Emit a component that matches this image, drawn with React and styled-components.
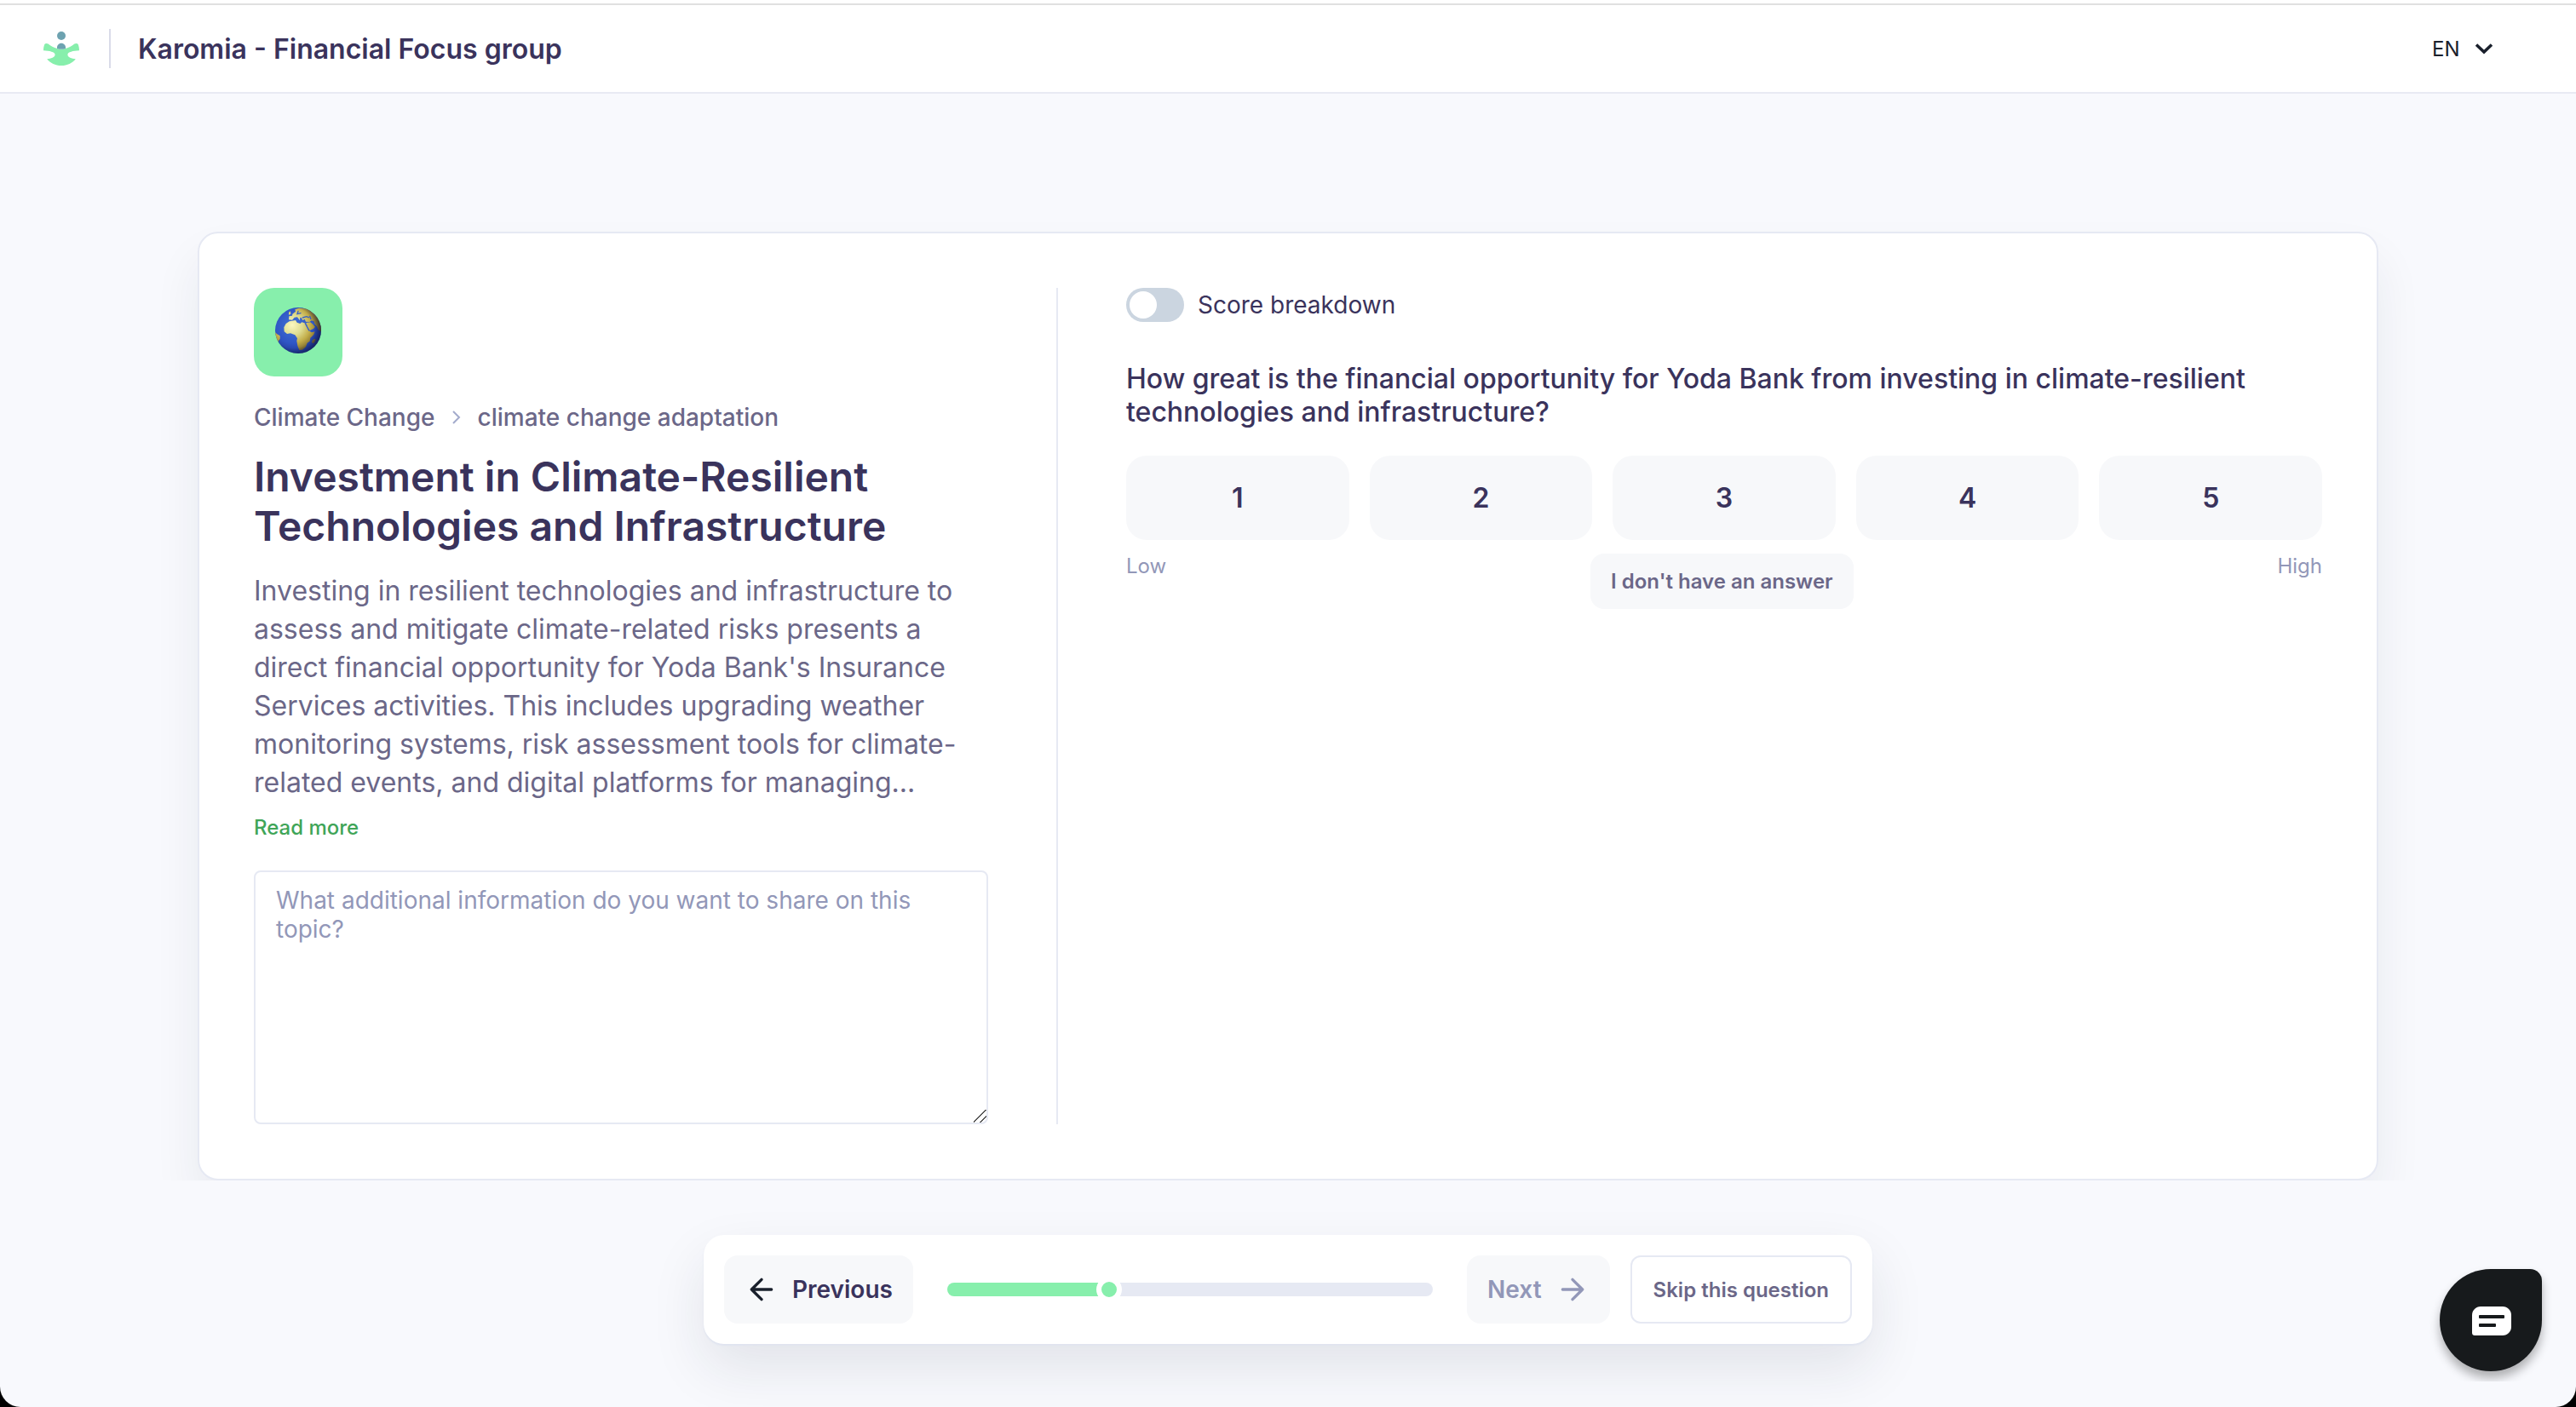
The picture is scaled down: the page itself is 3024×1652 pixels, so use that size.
import { useState } from 'react';
import styled, { createGlobalStyle } from 'styled-components';

const GlobalStyle = createGlobalStyle`
  * {
    box-sizing: border-box;
  }

  body {
    margin: 0;
    background: #000;
    font-family: 'Inter', sans-serif;
    color: #3a335c;
  }

  h1, h2, p {
    margin: 0;
  }

  button, select, textarea {
    font-family: inherit;
  }
`;

const Page = styled.div`
  display: flex;
  flex-direction: column;
  min-height: 100vh;
  background: #f8f9fd;
  border-radius: 0 0 24px 24px;
`;

const Header = styled.header`
  display: flex;
  align-items: center;
  gap: 32px;
  height: 106px;
  margin-top: 4px;
  padding: 0 92px 0 48px;
  background: #fff;
  border-top: 2px solid #e0e0e0;
  border-bottom: 2px solid #e8eaf3;
  box-shadow: 0 -4px 0 #fff;
`;

const HeaderDivider = styled.span`
  width: 2px;
  height: 46px;
  background: #d9dbe9;
`;

const HeaderTitle = styled.h1`
  font-size: 32px;
  line-height: 39px;
  font-weight: 600;
`;

const LanguagePicker = styled.label`
  position: relative;
  display: flex;
  align-items: center;
  margin-left: auto;
  color: #1a202c;

  svg {
    position: absolute;
    right: 0;
    pointer-events: none;
  }
`;

const LanguageSelect = styled.select`
  appearance: none;
  width: 77px;
  padding: 0;
  border: 0;
  background: transparent;
  color: inherit;
  font-size: 24px;
  line-height: 29px;
`;

const Stage = styled.main`
  overflow: hidden;
  padding: 162px 64px 0;
`;

const Card = styled.section`
  display: grid;
  grid-template-columns: 862fr 2px 1404fr;
  gap: 80px;
  max-width: 2560px;
  margin: 0 auto;
  padding: 64px;
  background: #fff;
  border: 2px solid #e6e9f3;
  border-radius: 24px;
  box-shadow: 0 32px 56px rgba(30, 40, 60, 0.07);
`;

const ColumnDivider = styled.div`
  background: #e6e9f3;
`;

const Topic = styled.div`
  display: flex;
  flex-direction: column;
  align-items: flex-start;
`;

const TopicIcon = styled.div`
  display: flex;
  align-items: center;
  justify-content: center;
  width: 104px;
  height: 104px;
  padding-bottom: 4px;
  border-radius: 24px;
  background: #87efac;
`;

const Breadcrumb = styled.nav`
  display: flex;
  align-items: center;
  gap: 16px;
  margin-top: 32px;
  font-size: 28px;
  line-height: 32px;
  font-weight: 500;
  color: #6b6788;
`;

const TopicTitle = styled.h2`
  margin-top: 25px;
  font-size: 48px;
  line-height: 58px;
  font-weight: 600;
`;

const Description = styled.p`
  margin-top: 24px;
  font-size: 32px;
  line-height: 45px;
  color: #6b6788;
`;

const ReadMore = styled.button`
  margin-top: 16px;
  padding: 0;
  border: 0;
  background: none;
  font-size: 24px;
  line-height: 29px;
  font-weight: 500;
  color: #3fa558;
`;

const Comment = styled.textarea`
  width: 100%;
  min-height: 298px;
  margin-top: 36px;
  padding: 16px 24px;
  border: 2px solid #e6e9f3;
  border-radius: 8px;
  font-size: 28px;
  line-height: 34px;
  resize: vertical;

  &::placeholder {
    color: #9297b8;
  }

  &::-webkit-resizer {
    background: linear-gradient(
      135deg,
      transparent 46%,
      #555 46% 53%,
      transparent 53% 73%,
      #555 73% 80%,
      transparent 80%
    );
  }
`;

const ToggleLabel = styled.label`
  display: flex;
  align-items: center;
  gap: 16px;
  font-size: 28px;
  line-height: 34px;
`;

const Toggle = styled.input`
  appearance: none;
  width: 68px;
  height: 40px;
  margin: 0;
  padding: 4px;
  border-radius: 20px;
  background: #cbd5e0;

  &::before {
    content: '';
    display: block;
    width: 32px;
    height: 32px;
    border-radius: 50%;
    background: #fff;
  }

  &:checked {
    background: #87efac;
  }

  &:checked::before {
    margin-left: auto;
  }
`;

const Question = styled.h2`
  margin-top: 47px;
  font-size: 32px;
  line-height: 39px;
  font-weight: 500;
`;

const Scores = styled.div`
  display: grid;
  grid-template-columns: repeat(5, 1fr);
  gap: 24px;
  margin-top: 32px;
`;

const ScoreButton = styled.button`
  height: 99px;
  border: 0;
  border-radius: 24px;
  background: ${({ $active }) => ($active ? '#87efac' : '#f7f8fa')};
  color: #3a335c;
  font-size: 32px;
  line-height: 39px;
  font-weight: 600;
`;

const ScoreFooter = styled.div`
  display: flex;
  align-items: flex-start;
  justify-content: space-between;
  margin-top: 16px;
  font-size: 24px;
  line-height: 29px;
  color: #9297b8;
`;

const NoAnswerButton = styled.button`
  padding: 18px 24px;
  border: 0;
  border-radius: 16px;
  background: #f7f8fa;
  color: #6b6788;
  font-size: 24px;
  line-height: 29px;
  font-weight: 600;
`;

const BottomBar = styled.footer`
  display: flex;
  align-items: center;
  gap: 24px;
  width: 1372px;
  max-width: 100%;
  margin: 64px auto 74px;
  padding: 24px;
  background: #fff;
  border-radius: 24px;
  box-shadow: 0 2px 2px #e0e4f0, 0 28px 64px rgba(30, 35, 60, 0.1);
`;

const NavButton = styled.button`
  display: flex;
  align-items: center;
  gap: 16px;
  height: 80px;
  padding: 0 24px;
  border: 0;
  border-radius: 16px;
  background: #f7f8fa;
  color: #3a335c;
  font-size: 28px;
  line-height: 34px;
  font-weight: 600;

  svg {
    color: #1a202c;
  }

  &:disabled,
  &:disabled svg {
    color: #9297b8;
  }
`;

const SkipButton = styled.button`
  height: 80px;
  padding: 0 25px;
  border: 2px solid #e6e9f3;
  border-radius: 12px;
  background: #fff;
  color: #6b6788;
  font-size: 24px;
  line-height: 29px;
  font-weight: 600;
  white-space: nowrap;
`;

const Progress = styled.input`
  appearance: none;
  flex: 1;
  min-width: 0;
  height: 16px;
  margin: 0 16px;
  border-radius: 8px;
  background: linear-gradient(to right, #87efac 33%, #e6e9f3 33%);

  &::-webkit-slider-thumb {
    appearance: none;
    width: 30px;
    height: 30px;
    border: 6px solid #fff;
    border-radius: 50%;
    background: #87efac;
  }
`;

const Launcher = styled.div`
  position: fixed;
  right: 28px;
  bottom: 30px;
  padding: 12px;
  overflow: hidden;
`;

const ChatButton = styled.button`
  display: flex;
  align-items: center;
  justify-content: center;
  width: 120px;
  height: 120px;
  padding: 2px 0 0 2px;
  border: 0;
  border-radius: 60px 14px 60px 60px;
  background: #171a1c;
  box-shadow: 0 8px 12px rgba(0, 0, 0, 0.3);
`;

const Logo = () => (
  <svg width="48" height="48" viewBox="0 0 48 48" aria-hidden="true">
    <path
      fill="#87efac"
      d="M3 26.3C3 23 3.6 20.5 4.5 18.8C5.3 17.7 7.2 17.6 8.6 18.6C11.5 21 15 23.2 19.2 23.9Q24 26 28.8 23.9C33 23.2 36.5 21 39.4 18.6C40.8 17.6 42.7 17.7 43.5 18.8C44.4 20.5 45 23 45 26.3C38 26.6 31.4 28 31.4 31.3C31.4 34.5 36 35.8 40.8 36.2C37 41 31 44 24 44C17 44 11 41 7.2 36.2C12 35.8 16.6 34.5 16.6 31.3C16.6 28 10 26.6 3 26.3Z"
    />
    <circle cx="24" cy="9" r="5" fill="#6da2b0" />
    <path fill="#6da2b0" d="M19 23.9C18.6 20 21 17.7 24 17.7C27 17.7 29.4 20 29 23.9Q24 25.8 19 23.9Z" />
  </svg>
);

const Globe = () => (
  <svg width="56" height="56" viewBox="97 90 168 168" aria-hidden="true">
    <defs>
      <radialGradient id="ocean" cx="0.4" cy="0.4" r="0.65">
        <stop offset="0" stopColor="#4273d6" />
        <stop offset="0.6" stopColor="#2f55c4" />
        <stop offset="1" stopColor="#1d3389" />
      </radialGradient>
      <radialGradient id="land" gradientUnits="userSpaceOnUse" cx="160" cy="155" r="100">
        <stop offset="0" stopColor="#fbf7c0" />
        <stop offset="0.35" stopColor="#dfdd92" />
        <stop offset="0.65" stopColor="#c2ac48" />
        <stop offset="1" stopColor="#6b5a26" />
      </radialGradient>
      <radialGradient id="shade" cx="0.4" cy="0.45" r="0.62">
        <stop offset="0.7" stopColor="#0c1440" stopOpacity="0" />
        <stop offset="1" stopColor="#0c1440" stopOpacity="0.6" />
      </radialGradient>
      <clipPath id="sphere">
        <circle cx="181" cy="174" r="81" />
      </clipPath>
    </defs>
    <circle cx="181" cy="174" r="81" fill="url(#ocean)" />
    <g fill="url(#land)" clipPath="url(#sphere)">
      <path d="M131 163L138 150L150 142L172 138L177 146L188 150L194 145L209 149L214 163L222 177L229 181L240 178L236 189L224 200L222 212L213 218L208 232L196 242L185 243L179 228L176 211L178 202L170 190L154 184L142 186L132 178Z" />
      <path d="M148 136L149 124L160 122L161 116L172 107L170 100L184 95L201 97L222 96L246 115L265 145L262 178L252 172L247 160L240 153L236 142L228 139L221 144L208 143L204 134L197 138L192 129L188 128L187 139L178 127L168 128L160 137Z" />
      <path d="M209 147L224 145L233 152L241 161L235 168L222 174L215 163Z" />
      <path d="M238 203L243 206L236 220L229 217L231 209Z" />
      <path d="M97 178L107 187L117 193L117 204L112 210L112 220L104 222L97 205Z" />
      <path d="M148 110L154 106L155 116L148 119Z" />
    </g>
    <g fill="none" stroke="#3560c8" strokeWidth="4" strokeLinecap="round">
      <path d="M206 149L219 174" />
      <path d="M230 144L238 153" />
      <path d="M197 129L210 125L218 128" />
      <path d="M181 106L178 116L190 113" />
      <path d="M222 124L226 134" />
    </g>
    <circle cx="181" cy="174" r="81" fill="url(#shade)" />
  </svg>
);

const Arrow = ({ d }) => (
  <svg
    width="40"
    height="40"
    viewBox="0 0 24 24"
    fill="none"
    stroke="currentColor"
    strokeWidth="2"
    strokeLinecap="round"
    strokeLinejoin="round"
    aria-hidden="true"
  >
    <path d={d} />
  </svg>
);

const scores = [1, 2, 3, 4, 5];

export default function App() {
  const [score, setScore] = useState(null);

  return (
    <>
      <GlobalStyle />
      <Page>
        <Header>
          <Logo />
          <HeaderDivider />
          <HeaderTitle>Karomia - Financial Focus group</HeaderTitle>
          <LanguagePicker>
            <LanguageSelect aria-label="Language">
              <option>EN</option>
            </LanguageSelect>
            <svg width="32" height="32" viewBox="0 0 32 32" fill="none" aria-hidden="true">
              <path d="M7 11.5L16 20L25 11.5" stroke="currentColor" strokeWidth="3.5" />
            </svg>
          </LanguagePicker>
        </Header>

        <Stage>
          <Card>
            <Topic>
              <TopicIcon>
                <Globe />
              </TopicIcon>
              <Breadcrumb>
                <span>Climate Change</span>
                <svg width="18" height="18" viewBox="0 0 18 18" fill="none" aria-hidden="true">
                  <path d="M5 2L12 9L5 16" stroke="#a3abcc" strokeWidth="2" />
                </svg>
                <span>climate change adaptation</span>
              </Breadcrumb>
              <TopicTitle>Investment in Climate-Resilient Technologies and Infrastructure</TopicTitle>
              <Description>
                Investing in resilient technologies and infrastructure to assess and mitigate
                climate-related risks presents a direct financial opportunity for Yoda Bank's
                Insurance Services activities. This includes upgrading weather monitoring systems,
                risk assessment tools for climate-related events, and digital platforms for
                managing...
              </Description>
              <ReadMore type="button">Read more</ReadMore>
              <Comment
                aria-label="Additional information"
                placeholder="What additional information do you want to share on this topic?"
              />
            </Topic>

            <ColumnDivider />

            <div>
              <ToggleLabel>
                <Toggle type="checkbox" />
                Score breakdown
              </ToggleLabel>
              <Question>
                How great is the financial opportunity for Yoda Bank from investing in
                climate-resilient technologies and infrastructure?
              </Question>
              <Scores>
                {scores.map((value) => (
                  <ScoreButton
                    key={value}
                    type="button"
                    $active={score === value}
                    onClick={() => setScore(value)}
                  >
                    {value}
                  </ScoreButton>
                ))}
              </Scores>
              <ScoreFooter>
                <span>Low</span>
                <NoAnswerButton type="button">I don't have an answer</NoAnswerButton>
                <span>High</span>
              </ScoreFooter>
            </div>
          </Card>
        </Stage>

        <BottomBar>
          <NavButton type="button">
            <Arrow d="M19 12H5M12 19L5 12L12 5" />
            Previous
          </NavButton>
          <Progress type="range" min="0" max="40" defaultValue="13" aria-label="Progress" />
          <NavButton type="button" disabled={score === null}>
            Next
            <Arrow d="M5 12H19M12 5L19 12L12 19" />
          </NavButton>
          <SkipButton type="button">Skip this question</SkipButton>
        </BottomBar>
      </Page>

      <Launcher>
        <ChatButton type="button" aria-label="Open chat">
          <svg width="46" height="34" viewBox="0 0 46 34" aria-hidden="true">
            <path
              fill="#fff"
              d="M10 0H36C41.5 0 46 4.5 46 10V24C46 29.5 41.5 34 36 34H3C1.3 34 0 32.7 0 31V10C0 4.5 4.5 0 10 0Z"
            />
            <rect x="8" y="10" width="30" height="4" rx="1" fill="#171a1c" />
            <rect x="8" y="20" width="20" height="4" rx="1" fill="#171a1c" />
          </svg>
        </ChatButton>
      </Launcher>
    </>
  );
}
